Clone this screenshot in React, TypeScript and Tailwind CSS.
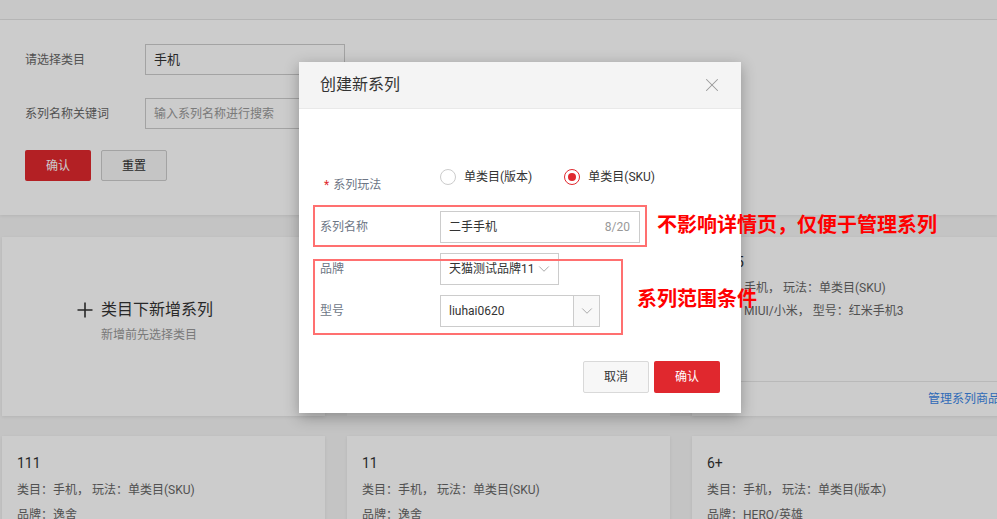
import { X, ChevronDown } from "lucide-react";

const SeriesCard = ({ title, lines }: { title: string; lines: string[] }) => {
  return (
    <div className="w-[323px] shrink-0 bg-white shadow-[0_1px_3px_rgba(0,0,0,0.08)] pl-[15px] pt-[17px] h-[200px]">
      <div className="text-[14px] leading-[20px] text-[#333]">{title}</div>
      <div className="mt-[7px] flex flex-col gap-[5px] text-[12px] leading-[20px] text-[#666]">
        {lines.map((l) => (
          <div key={l}>{l}</div>
        ))}
      </div>
    </div>
  );
};

const App = () => {
  return (
    <div className="relative w-[997px] h-[519px] overflow-hidden bg-[#f5f5f5] font-['Roboto','Noto_Sans_CJK_SC',sans-serif]">
      {/* top strip */}
      <div className="h-[20px] bg-[#fbfbfb] border-b border-[#e6e6e6]" />

      {/* search panel */}
      <div className="bg-white pl-[25px] pt-[24px] pb-[34px] shadow-[0_1px_3px_rgba(0,0,0,0.08)]">
        <div className="flex items-center h-[31px]">
          <div className="w-[120px] text-[12px] text-[#666]">请选择类目</div>
          <div className="w-[200px] h-[31px] border border-[#ccc] flex items-center pl-[8px] text-[13px] text-[#333]">
            手机
          </div>
        </div>
        <div className="flex items-center h-[31px] mt-[23px]">
          <div className="w-[120px] text-[12px] text-[#666]">系列名称关键词</div>
          <div className="w-[200px] h-[31px] border border-[#ccc] flex items-center pl-[8px] text-[12px] text-[#999]">
            输入系列名称进行搜索
          </div>
        </div>
        <div className="flex gap-[10px] mt-[21px]">
          <button className="w-[66px] h-[31px] rounded-[2px] bg-[#e0282e] text-white text-[12px]">确认</button>
          <button className="w-[66px] h-[31px] rounded-[2px] border border-[#ccc] bg-[#f7f7f7] text-[#333] text-[12px]">
            重置
          </button>
        </div>
      </div>

      {/* cards */}
      <div className="pl-[2px] mt-[22px] flex gap-[22px]">
        <div className="w-[323px] h-[179px] shrink-0 bg-white shadow-[0_1px_3px_rgba(0,0,0,0.08)] pl-[75px] pt-[61px] flex gap-[8px]">
          <svg width="16" height="24" viewBox="0 0 16 24" className="shrink-0">
            <path d="M8 4.5v15M0.5 12h15" stroke="#333" strokeWidth="1.6" />
          </svg>
          <div>
            <div className="text-[16px] leading-[24px] text-[#333]">类目下新增系列</div>
            <div className="mt-[4px] text-[12px] leading-[18px] text-[#999]">新增前先选择类目</div>
          </div>
        </div>
        <div className="w-[323px] h-[179px] shrink-0 bg-white" />
        <div className="w-[323px] h-[179px] shrink-0 bg-white shadow-[0_1px_3px_rgba(0,0,0,0.08)] flex flex-col">
          <div className="pl-[16px] pt-[16px] flex-1">
            <div className="text-[14px] leading-[18px] text-[#333]">小米5</div>
            <div className="mt-[7px] flex flex-col gap-[3px] text-[12px] leading-[20px] text-[#666]">
              <div>类目：手机， 玩法：单类目(SKU)</div>
              <div>品牌：MIUI/小米， 型号：红米手机3</div>
            </div>
          </div>
          <div className="h-[35px] border-t border-[#e8e8e8] flex items-center justify-end pr-[15px] text-[12px] text-[#3c87e6]">
            管理系列商品
          </div>
        </div>
      </div>
      <div className="pl-[2px] mt-[20px] flex gap-[22px]">
        <SeriesCard title="111" lines={["类目：手机， 玩法：单类目(SKU)", "品牌：逸舍"]} />
        <SeriesCard title="11" lines={["类目：手机， 玩法：单类目(SKU)", "品牌：逸舍"]} />
        <SeriesCard title="6+" lines={["类目：手机， 玩法：单类目(版本)", "品牌：HERO/英雄"]} />
      </div>

      {/* mask */}
      <div className="absolute inset-0 bg-black/20" />

      {/* dialog */}
      <div className="absolute left-[299px] top-[62px] w-[442px] h-[351px] bg-white shadow-[0_4px_14px_rgba(0,0,0,0.3)] flex flex-col">
        <div className="h-[47px] bg-[#f4f4f4] border-b border-[#e9e9e9] flex items-center justify-between pl-[21px] pr-[18px]">
          <span className="text-[16px] text-[#333]">创建新系列</span>
          <X size={22} strokeWidth={1.1} className="text-[#999]" />
        </div>
        <div className="pl-[21px] pr-[21px] pt-[60px]">
          <div className="flex h-[32px]">
            <div className="w-[120px] mt-[8px] leading-[16px] text-[12px] text-[#6d7685] pl-[4px]">
              <span className="text-[#e0282e] mr-[4px]">*</span>系列玩法
            </div>
            <div className="flex items-center h-[16px] text-[12px] text-[#333]">
              <span className="w-[16px] h-[16px] rounded-full border border-[#ccc]" />
              <span className="ml-[8px]">单类目(版本)</span>
              <span className="ml-[32px] w-[16px] h-[16px] rounded-full border border-[#e0282e] flex items-center justify-center">
                <span className="w-[8px] h-[8px] rounded-full bg-[#e0282e]" />
              </span>
              <span className="ml-[8px]">单类目(SKU)</span>
            </div>
          </div>

          <div className="flex items-center h-[32px] mt-[10px]">
            <div className="w-[120px] text-[12px] text-[#6d7685]">系列名称</div>
            <div className="w-[200px] h-[32px] border border-[#ccc] flex items-center justify-between pl-[8px] pr-[9px] text-[12px]">
              <span className="text-[#333]">二手手机</span>
              <span className="text-[#999]">8/20</span>
            </div>
          </div>

          <div className="flex items-center h-[32px] mt-[10px]">
            <div className="w-[120px] text-[12px] text-[#6d7685]">品牌</div>
            <div className="w-[119px] h-[32px] border border-[#ccc] flex items-center justify-between pl-[8px] pr-[5px] text-[12px] text-[#333]">
              <span>天猫测试品牌11</span>
              <ChevronDown size={18} strokeWidth={1.1} className="text-[#999]" />
            </div>
          </div>

          <div className="flex items-center h-[32px] mt-[10px]">
            <div className="w-[120px] text-[12px] text-[#6d7685]">型号</div>
            <div className="w-[160px] h-[32px] border border-[#ccc] flex items-center text-[12px] text-[#333]">
              <span className="flex-1 pl-[8px]">liuhai0620</span>
              <span className="w-[26px] h-full border-l border-[#ccc] bg-[#f8f8f8] flex items-center justify-center">
                <ChevronDown size={18} strokeWidth={1.1} className="text-[#999]" />
              </span>
            </div>
          </div>

          <div className="flex justify-end gap-[5px] mt-[34px]">
            <button className="w-[66px] h-[32px] rounded-[2px] border border-[#d9d9d9] bg-[#f7f7f7] text-[12px] text-[#333]">
              取消
            </button>
            <button className="w-[66px] h-[32px] rounded-[2px] bg-[#e0282e] text-[12px] text-white">确认</button>
          </div>
        </div>
      </div>

      {/* annotations */}
      <div className="absolute left-[313px] top-[205px] w-[334px] h-[42px] border-2 border-[#ff7070]" />
      <div className="absolute left-[313px] top-[259px] w-[310px] h-[76px] border-2 border-[#ff7070]" />
      <div className="absolute left-[657px] top-[211px] leading-[28px] text-[20px] font-bold text-[#ff0000]">
        不影响详情页，仅便于管理系列
      </div>
      <div className="absolute left-[637px] top-[285px] leading-[28px] text-[20px] font-bold text-[#ff0000]">
        系列范围条件
      </div>
    </div>
  );
};

export default App;
